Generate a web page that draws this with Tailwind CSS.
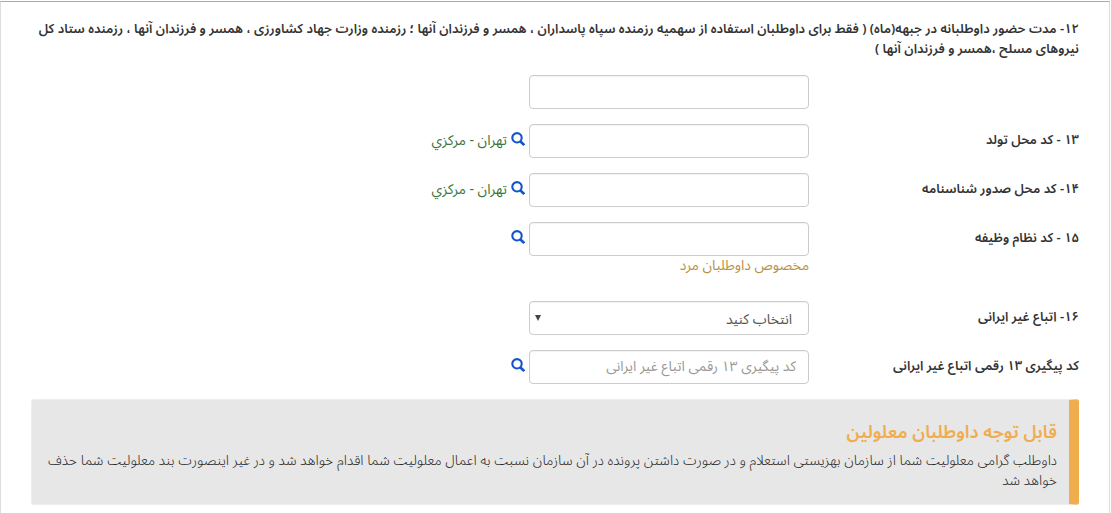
<!doctype html>
<html lang="fa" dir="rtl">
<head>
<meta charset="utf-8">
<meta name="viewport" content="width=device-width,initial-scale=1">
<title>فرم ثبت نام</title>
<script src="https://cdn.jsdelivr.net/npm/@tailwindcss/browser@4"></script>
</head>

<body class="bg-white text-[#333] text-[14px] leading-5 font-['Noto_Sans_Arabic','DejaVu_Sans',sans-serif]">

<!-- آیکن جستجو -->
<svg class="hidden">
  <symbol id="search" viewBox="0 0 14 14">
    <circle cx="6" cy="5.8" r="4.7" fill="none" stroke="currentColor" stroke-width="2.1"/>
    <path d="M9.2 9.2L13.2 13" fill="none" stroke="currentColor" stroke-width="2.6"/>
  </symbol>
</svg>

<main class="mt-px mr-px min-h-[calc(100vh-1px)] border-t border-x border-t-[#aaa] border-x-[#ddd] px-[30px] pt-[17px]">

  <!-- ۱۲ -->
  <div class="mb-[15px]">
    <label for="front" class="block text-[13px] leading-5 font-semibold mb-4">۱۲- مدت حضور داوطلبانه در جبهه(ماه) ( فقط برای داوطلبان استفاده از سهمیه رزمنده سپاه پاسداران ، همسر و فرزندان آنها ؛ رزمنده وزارت جهاد کشاورزی ، همسر و فرزندان آنها ، رزمنده ستاد کل نیروهای مسلح ،همسر و فرزندان آنها )</label>
    <input id="front" type="text" class="block ms-[270px] w-[280px] h-[34px] rounded-sm border border-[#ccc] px-3 inset-shadow-xs">
  </div>

  <!-- ۱۳ -->
  <div class="flex mb-[15px]">
    <label for="birth" class="w-[270px] shrink-0 pt-[6px] text-[13px] leading-5 font-semibold">۱۳ - کد محل تولد</label>
    <input id="birth" type="text" class="w-[280px] h-[34px] rounded-sm border border-[#ccc] px-3 inset-shadow-xs">
    <button type="button" aria-label="جستجو" class="self-start ms-1 mt-2 text-[#1155cc]"><svg class="size-[14px]"><use href="#search"/></svg></button>
    <span class="ms-1 pt-[7px] text-[#3c763d]">تهران - مركزي</span>
  </div>

  <!-- ۱۴ -->
  <div class="flex mb-[15px]">
    <label for="issue" class="w-[270px] shrink-0 pt-[6px] text-[13px] leading-5 font-semibold">۱۴- کد محل صدور شناسنامه</label>
    <input id="issue" type="text" class="w-[280px] h-[34px] rounded-sm border border-[#ccc] px-3 inset-shadow-xs">
    <button type="button" aria-label="جستجو" class="self-start ms-1 mt-2 text-[#1155cc]"><svg class="size-[14px]"><use href="#search"/></svg></button>
    <span class="ms-1 pt-[7px] text-[#3c763d]">تهران - مركزي</span>
  </div>

  <!-- ۱۵ -->
  <div class="flex mb-[25px]">
    <label for="military" class="w-[270px] shrink-0 pt-[6px] text-[13px] leading-5 font-semibold">۱۵ - کد نظام وظیفه</label>
    <div>
      <input id="military" type="text" class="block w-[280px] h-[34px] rounded-sm border border-[#ccc] px-3 inset-shadow-xs">
      <p class="text-[#b8924a]">مخصوص داوطلبان مرد</p>
    </div>
    <button type="button" aria-label="جستجو" class="self-start ms-1 mt-2 text-[#1155cc]"><svg class="size-[14px]"><use href="#search"/></svg></button>
  </div>

  <!-- ۱۶ -->
  <div class="flex mb-[15px]">
    <label for="foreign" class="w-[270px] shrink-0 pt-[6px] text-[13px] leading-5 font-semibold">۱۶- اتباع غیر ایرانی</label>
    <div class="relative">
      <select id="foreign" class="block w-[280px] h-[34px] appearance-none rounded-sm border border-[#ccc] bg-white px-4 pt-1 text-[#555] inset-shadow-xs">
        <option>انتخاب کنید</option>
      </select>
      <svg class="pointer-events-none absolute left-[6px] top-[14px] w-[6px] h-[6px]" viewBox="0 0 6 6"><path d="M0 0h6L3 6z" fill="#444"/></svg>
    </div>
  </div>

  <div class="flex mb-[15px]">
    <label for="track" class="w-[270px] shrink-0 pt-[6px] text-[13px] leading-5 font-semibold">کد پیگیری ۱۳ رقمی اتباع غیر ایرانی</label>
    <input id="track" type="text" placeholder="کد پیگیری ۱۳ رقمی اتباع غیر ایرانی" class="w-[280px] h-[34px] rounded-sm border border-[#ccc] px-3 pb-[2px] placeholder:text-[#999] inset-shadow-xs">
    <button type="button" aria-label="جستجو" class="self-start ms-1 mt-2 text-[#1155cc]"><svg class="size-[14px]"><use href="#search"/></svg></button>
  </div>

  <!-- توجه -->
  <section class="rounded-[3px] border border-[#eee] border-s-[10px] border-s-[#f0ad4e] bg-[#e7e7e7] ps-3 pe-2 pt-[20px] pb-[13px]">
    <h4 class="mb-[6px] text-[18px] leading-[25px] font-semibold text-[#f0ad4e]">قابل توجه داوطلبان معلولین</h4>
    <p class="font-light text-[#222]">داوطلب گرامی معلولیت شما از سازمان بهزیستی استعلام و در صورت داشتن پرونده در آن سازمان نسبت به اعمال معلولیت شما اقدام خواهد شد و در غیر اینصورت بند معلولیت شما حذف خواهد شد</p>
  </section>
</main>

</body>
</html>
